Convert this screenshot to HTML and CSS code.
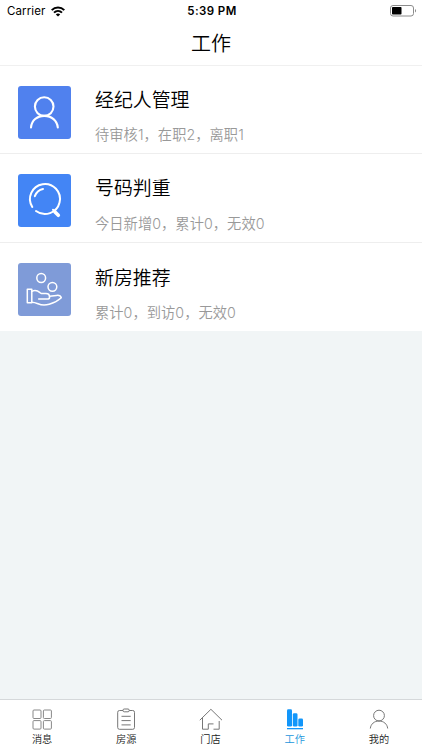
FILE: index.html
```html
<!DOCTYPE html>
<html lang="zh-CN">
	<head>
		<meta charset="utf-8">
		<title>工作</title>
		<link rel="stylesheet" href="styles.css">
	</head>
	<body>
		<div class="status">
			<div class="carrier">
				<span>Carrier</span>
				<svg width="14" height="11" viewBox="0 0 14 11" fill="none" stroke="#000" stroke-width="2">
					<path d="M0.7 4.1C4.2 0.6 9.8 0.6 13.3 4.1" />
					<path d="M3 6.6C5.3 4.4 8.7 4.4 11 6.6" />
					<path d="M7 10.6L4.8 8.4C6 7.2 8 7.2 9.2 8.4Z" fill="#000" stroke="none" />
				</svg>
			</div>
			<div class="time">5:39 PM</div>
			<div class="battery">
				<svg width="27" height="12" viewBox="0 0 27 12">
					<rect x="0.5" y="0.5" width="23" height="10.5" rx="2.5" fill="#fff" stroke="#8c8c8c" />
					<rect x="2" y="2" width="9.5" height="7.5" rx="0.8" fill="#000" />
					<path d="M25 4C26.4 4.5 26.4 7 25 7.5Z" fill="#8c8c8c" />
				</svg>
			</div>
		</div>
		<h1 class="title">工作</h1>
		<ul class="list">
			<li>
				<div class="icon agent">
					<svg width="53" height="53" viewBox="0 0 53 53" fill="none" stroke="#fff" stroke-width="2.1" stroke-linecap="round">
						<circle cx="26.2" cy="20.6" r="9.3" />
						<path d="M13 41.5C13.6 34.5 19 29.9 26.3 29.9S39.2 34.5 39.8 41.5" />
					</svg>
				</div>
				<div class="info">
					<h2>经纪人管理</h2>
					<p>待审核1，在职2，离职1</p>
				</div>
			</li>
			<li>
				<div class="icon number">
					<svg width="53" height="53" viewBox="0 0 53 53" fill="none" stroke="#fff" stroke-width="2" stroke-linecap="round">
						<path d="M14.3 33A15 15 0 1 1 18 37" />
						<path d="M16.8 22.2C18.2 18.2 21 15.7 25 14.9" />
						<path d="M35 35.8L37 37.8" />
						<path d="M37 38L40.3 41.3" stroke-width="3.6" />
					</svg>
				</div>
				<div class="info">
					<h2>号码判重</h2>
					<p>今日新增0，累计0，无效0</p>
				</div>
			</li>
			<li>
				<div class="icon house">
					<svg width="53" height="53" viewBox="0 0 53 53" fill="none" stroke="#fff" stroke-width="1.5" stroke-linejoin="round" stroke-linecap="round">
						<circle cx="23.2" cy="15" r="4.4" />
						<circle cx="34.4" cy="23.8" r="4.4" />
						<path d="M9.3 26.3H13.8V39.8H9.3Z" />
						<path d="M13.8 28.3C17 26.5 19.5 27.4 22 29.6L23.2 30.5H28C30.2 30.5 31.4 31.9 31.5 33.3L38.5 32.4C41 32.1 42.8 32.9 43.3 34.7C40 37.8 35.6 40 31.2 41.2C26 42.7 23 42 20 40.7C17.8 39.8 16 39.2 13.8 39.2" />
						<path d="M20.7 36H30C31.4 35.7 31.8 34.7 31.5 33.3" />
					</svg>
				</div>
				<div class="info">
					<h2>新房推荐</h2>
					<p>累计0，到访0，无效0</p>
				</div>
			</li>
		</ul>
		<ul class="tabbar">
			<li>
				<svg width="24" height="24" viewBox="0 0 24 24" fill="none" stroke="#888">
					<rect x="3" y="3" width="8" height="8.5" rx="1" />
					<rect x="13.4" y="3" width="8" height="8.5" rx="1" />
					<rect x="3" y="13.6" width="8" height="8.5" rx="1" />
					<rect x="13.4" y="13.6" width="8" height="8.5" rx="1" />
				</svg>
				<span>消息</span>
			</li>
			<li>
				<svg width="24" height="24" viewBox="0 0 24 24" fill="none" stroke="#777">
					<path d="M9 3.5H5.5Q3.7 3.5 3.7 5.3V20.5Q3.7 22.3 5.5 22.3H18.7Q20.5 22.3 20.5 20.5V5.3Q20.5 3.5 18.7 3.5H15.2" />
					<rect x="9" y="2" width="6.2" height="2.8" rx="1.2" />
					<path d="M7.5 9.3H16.7M7.5 13.6H16.7M7.5 17.9H16.7" />
				</svg>
				<span>房源</span>
			</li>
			<li>
				<svg width="24" height="24" viewBox="0 0 24 24" fill="none" stroke="#777">
					<path d="M0.8 13.2L11.9 2.3L23 13.2" />
					<path d="M3.5 11V22.2H9.3V16.9H14.5M14.5 22.2H20.2V14" />
				</svg>
				<span>门店</span>
			</li>
			<li class="cur">
				<svg width="24" height="24" viewBox="0 0 24 24" fill="#1296fa">
					<rect x="4" y="2.3" width="5" height="17.2" rx="1.3" />
					<rect x="9.8" y="6.2" width="4.7" height="13.3" rx="1.3" />
					<rect x="15.3" y="11.5" width="4.7" height="8" rx="1.3" />
					<rect x="4" y="21" width="16" height="1.3" />
				</svg>
				<span>工作</span>
			</li>
			<li>
				<svg width="24" height="24" viewBox="0 0 24 24" fill="none" stroke="#777">
					<circle cx="12" cy="8.6" r="5.4" />
					<path d="M3.3 21.5C3.8 17 7.3 14 12 14S20.2 17 20.7 21.5" />
				</svg>
				<span>我的</span>
			</li>
		</ul>
	</body>
</html>
```
FILE: styles.css
```css
* {
	box-sizing: border-box;
}

body {
	margin: 0;
	height: 750px;
	display: flex;
	flex-direction: column;
	background-color: #f1f5f6;
	font-family: Inter, "Noto Sans CJK SC", sans-serif;
	color: #000;
	overflow: hidden;
}

ul,
li,
h1,
h2,
p {
	list-style: none;
	margin: 0;
	padding: 0;
	font-weight: 350;
}

svg {
	display: block;
}

/* 状态栏 */
.status {
	display: grid;
	grid-template-columns: 1fr auto 1fr;
	align-items: center;
	height: 22px;
	padding: 0 5px 0 7px;
	background-color: #fff;
	font-size: 11.5px;
}

.carrier {
	display: flex;
	align-items: center;
	gap: 6px;
	letter-spacing: 0.1px;
}

.time {
	font-weight: 600;
	font-size: 11.5px;
	letter-spacing: 0.4px;
}

.battery {
	display: flex;
	justify-content: flex-end;
}

.title {
	height: 44px;
	padding-top: 1px;
	line-height: 43px;
	border-bottom: 1px solid #f0f0f0;
	background-color: #fff;
	font-size: 20px;
	text-align: center;
}

.list > li {
	display: flex;
	height: 89px;
	padding: 20px 18px 0;
	border-bottom: 1px solid #eee;
	background-color: #fff;
}

.list > li:first-child {
	height: 88px;
}

.list > li:last-child {
	height: 88px;
	border-bottom: 0;
}

.icon {
	width: 53px;
	height: 53px;
	margin-right: 24px;
	border-radius: 3px;
}

.agent {
	background-color: #5081ee;
}

.number {
	background-color: #4385f5;
}

.house {
	background-color: #7f9bd8;
}

.info h2 {
	height: 28px;
	padding-top: 1px;
	line-height: 28px;
	font-size: 18.9px;
}

.info p {
	margin-top: 11px;
	line-height: 22px;
	font-size: 14.25px;
	letter-spacing: 0.05px;
	font-weight: 350;
	color: #999;
}

.list > li:first-child p {
	margin-top: 10px;
}

.list > li:last-child h2 {
	padding-top: 2px;
}

/* 底部导航 */
.tabbar {
	display: flex;
	height: 51px;
	margin-top: auto;
	padding-right: 1px;
	border-top: 1px solid #d5d8da;
	background-color: #fff;
}

.tabbar > li {
	flex: 1;
	display: flex;
	flex-direction: column;
	align-items: center;
	padding-top: 7px;
	font-size: 10.2px;
	line-height: 17px;
	color: #222;
}

.tabbar > .cur {
	color: #1a96dc;
}
```
